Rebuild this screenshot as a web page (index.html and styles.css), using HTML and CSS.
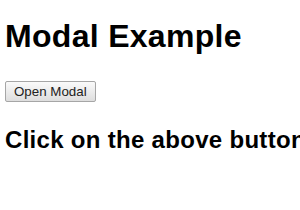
FILE: index.html
```html
<!DOCTYPE html>
<html lang="en">
<head>
  <meta charset="UTF-8">
  <title>Modal Example</title>
  <meta name="viewport" content="width=device-width, initial-scale=1">
  <link rel="stylesheet" href="styles.css">
</head>
<body>

  <h1>Modal Example</h1>

  <!-- modal trigger -->
  <button class="open-btn">Open Modal</button>

  <h2>Click on the above button to open the modal.</h2>

</body>
</html>
```

FILE: styles.css
```css
html {
  overflow: hidden;
}
body {
  font-family: "Liberation Sans", Arial, sans-serif;
  margin: 0;
  padding: 8px 5px;
  white-space: nowrap;
}
h1 {
  font-size: 32px;
  letter-spacing: 0.3px;
  margin: 10px 0 26px;
}
h2 {
  font-size: 24px;
  letter-spacing: 0.3px;
  margin: 24px 0;
}
.open-btn {
  display: block;
  font-family: "Liberation Sans", Arial, sans-serif;
  font-size: 13.33px;
  padding: 2px 8px;
  color: #222;
  background: linear-gradient(#fafafa, #dedede);
  border: 1px solid #a6a6a6;
  border-radius: 2px;
}
```
